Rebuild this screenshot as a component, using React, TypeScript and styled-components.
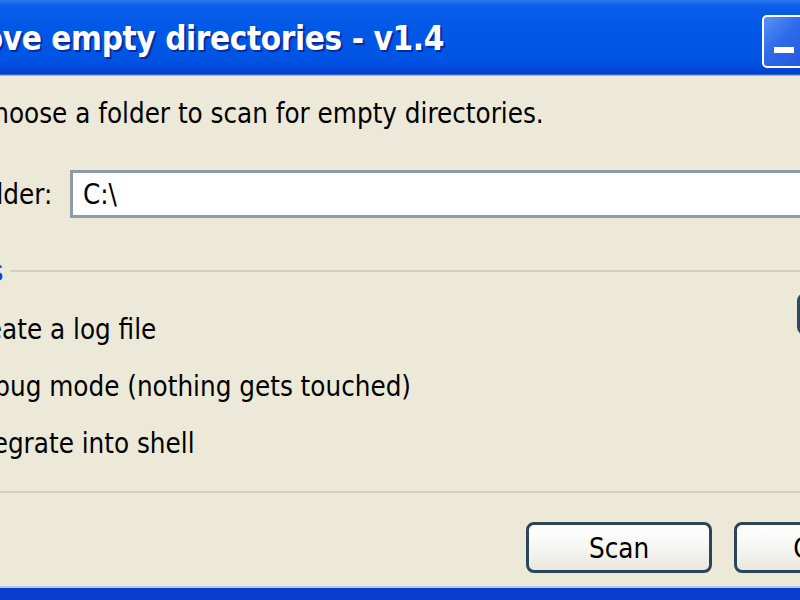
import styled, { createGlobalStyle } from 'styled-components';

const Global = createGlobalStyle`
  html, body {
    margin: 0;
    padding: 0;
    width: 800px;
    height: 600px;
    overflow: hidden;
    background: #ece9d8;
  }
  #root {
    width: 800px;
    height: 600px;
    overflow: hidden;
  }
`;

// the dialog is wider than the view and its left part is cut off
const Frame = styled.div`
  width: 1080px;
  height: 600px;
  margin-left: -140px;
  display: flex;
  flex-direction: column;
  background: #ece9d8;
  font-family: "DejaVu Sans Condensed", "DejaVu Sans", sans-serif;
  color: #000;
`;

const TitleBar = styled.div`
  flex: none;
  height: 76px;
  box-sizing: border-box;
  display: flex;
  align-items: center;
  justify-content: space-between;
  padding: 0 38px 0 0;
  background: linear-gradient(
    180deg,
    #2a78f2 0px,
    #0b5ce9 6px,
    #0058e6 30px,
    #0054e3 60px,
    #0047d6 70px,
    #003fc6 74px,
    #c9d6ee 76px
  );
`;

const Title = styled.div`
  display: flex;
  align-items: center;
  gap: 12px;
  padding-left: 6px;
  color: #fff;
  font-weight: bold;
  font-size: 33px;
  letter-spacing: -0.4px;
  text-shadow: 2px 2px 0 #0a2a9c;
`;

const AppIcon = styled.span`
  width: 32px;
  height: 32px;
  border-radius: 4px;
  background: #f3d36a;
`;

const Controls = styled.div`
  display: flex;
  gap: 4px;
  margin-top: 6px;
`;

const ControlButton = styled.div<{ $close?: boolean }>`
  width: 44px;
  height: 53px;
  box-sizing: border-box;
  border: 2px solid #fff;
  border-radius: 5px;
  display: flex;
  align-items: flex-end;
  justify-content: center;
  padding-bottom: 13px;
  background: ${(p) =>
    p.$close
      ? 'linear-gradient(135deg, #e98a6c, #c4441c)'
      : 'linear-gradient(135deg, #5a93f8 0%, #2e6be9 45%, #2558d9 100%)'};
`;

const MinBar = styled.span`
  width: 20px;
  height: 6px;
  background: #fff;
`;

const Content = styled.div`
  flex: 1;
  display: flex;
  flex-direction: column;
  padding: 22px 20px 0 40px;
  font-size: 27.5px;
  line-height: 30px;
`;

const Intro = styled.div`
  padding-left: 76px;
`;

const FolderRow = styled.div`
  display: grid;
  grid-template-columns: 170px 1fr;
  align-items: center;
  margin-top: 42px;
`;

const FieldLabel = styled.label`
  padding-left: 68px;
`;

const PathInput = styled.div`
  height: 48px;
  box-sizing: border-box;
  border: 3px solid #8d9ba8;
  background: #fff;
  display: flex;
  align-items: center;
  padding-left: 10px;
`;

const GroupHeader = styled.div`
  display: flex;
  align-items: center;
  gap: 7px;
  margin-top: 38px;
  padding-left: 8px;
`;

const GroupLabel = styled.span`
  color: #0046d5;
`;

const Rule = styled.div`
  flex: 1;
  height: 2px;
  background: #d2d0c2;
`;

const GroupBody = styled.div`
  display: flex;
  justify-content: space-between;
  align-items: flex-start;
`;

const OptionList = styled.div`
  display: flex;
  flex-direction: column;
  gap: 27px;
  margin-top: 28px;
  padding-left: 22px;
`;

const Option = styled.div`
  display: flex;
  align-items: center;
  gap: 10px;
`;

const Check = styled.span`
  width: 28px;
  height: 28px;
  box-sizing: border-box;
  border: 2px solid #1c5180;
  background: #fff;
`;

const SideButton = styled.div`
  width: 100px;
  height: 42px;
  margin: 7px 23px 0 0;
  box-sizing: border-box;
  border: 3px solid #2d4a60;
  border-radius: 8px;
  background: #f4f3ee;
`;

const BottomRule = styled.div`
  height: 2px;
  background: #d2d0c2;
  margin-top: 33px;
`;

const ButtonRow = styled.div`
  display: flex;
  justify-content: flex-end;
  gap: 22px;
  margin-top: 29px;
`;

const Button = styled.div`
  width: 186px;
  height: 51px;
  box-sizing: border-box;
  border: 3px solid #2d4657;
  border-radius: 8px;
  background: linear-gradient(180deg, #ffffff 0%, #f6f6f3 50%, #e8e7df 100%);
  display: flex;
  align-items: center;
  justify-content: center;
`;

const BottomBorder = styled.div`
  flex: none;
  height: 12px;
  margin-top: auto;
  border-top: 2px solid #b9c8ef;
  background: #0a3ccc;
`;

export default function App() {
  return (
    <>
      <Global />
      <Frame>
        <TitleBar>
          <Title>
            <AppIcon />
            Remove empty directories - v1.4
          </Title>
          <Controls>
            <ControlButton>
              <MinBar />
            </ControlButton>
            <ControlButton />
            <ControlButton $close />
          </Controls>
        </TitleBar>
        <Content>
          <Intro>Choose a folder to scan for empty directories.</Intro>
          <FolderRow>
            <FieldLabel>Folder:</FieldLabel>
            <PathInput>C:\</PathInput>
          </FolderRow>
          <GroupHeader>
            <GroupLabel>Options</GroupLabel>
            <Rule />
          </GroupHeader>
          <GroupBody>
            <OptionList>
              <Option>
                <Check />
                Create a log file
              </Option>
              <Option>
                <Check />
                Debug mode (nothing gets touched)
              </Option>
              <Option>
                <Check />
                Integrate into shell
              </Option>
            </OptionList>
            <SideButton />
          </GroupBody>
          <BottomRule />
          <ButtonRow>
            <Button>Scan</Button>
            <Button>Close</Button>
          </ButtonRow>
        </Content>
        <BottomBorder />
      </Frame>
    </>
  );
}
